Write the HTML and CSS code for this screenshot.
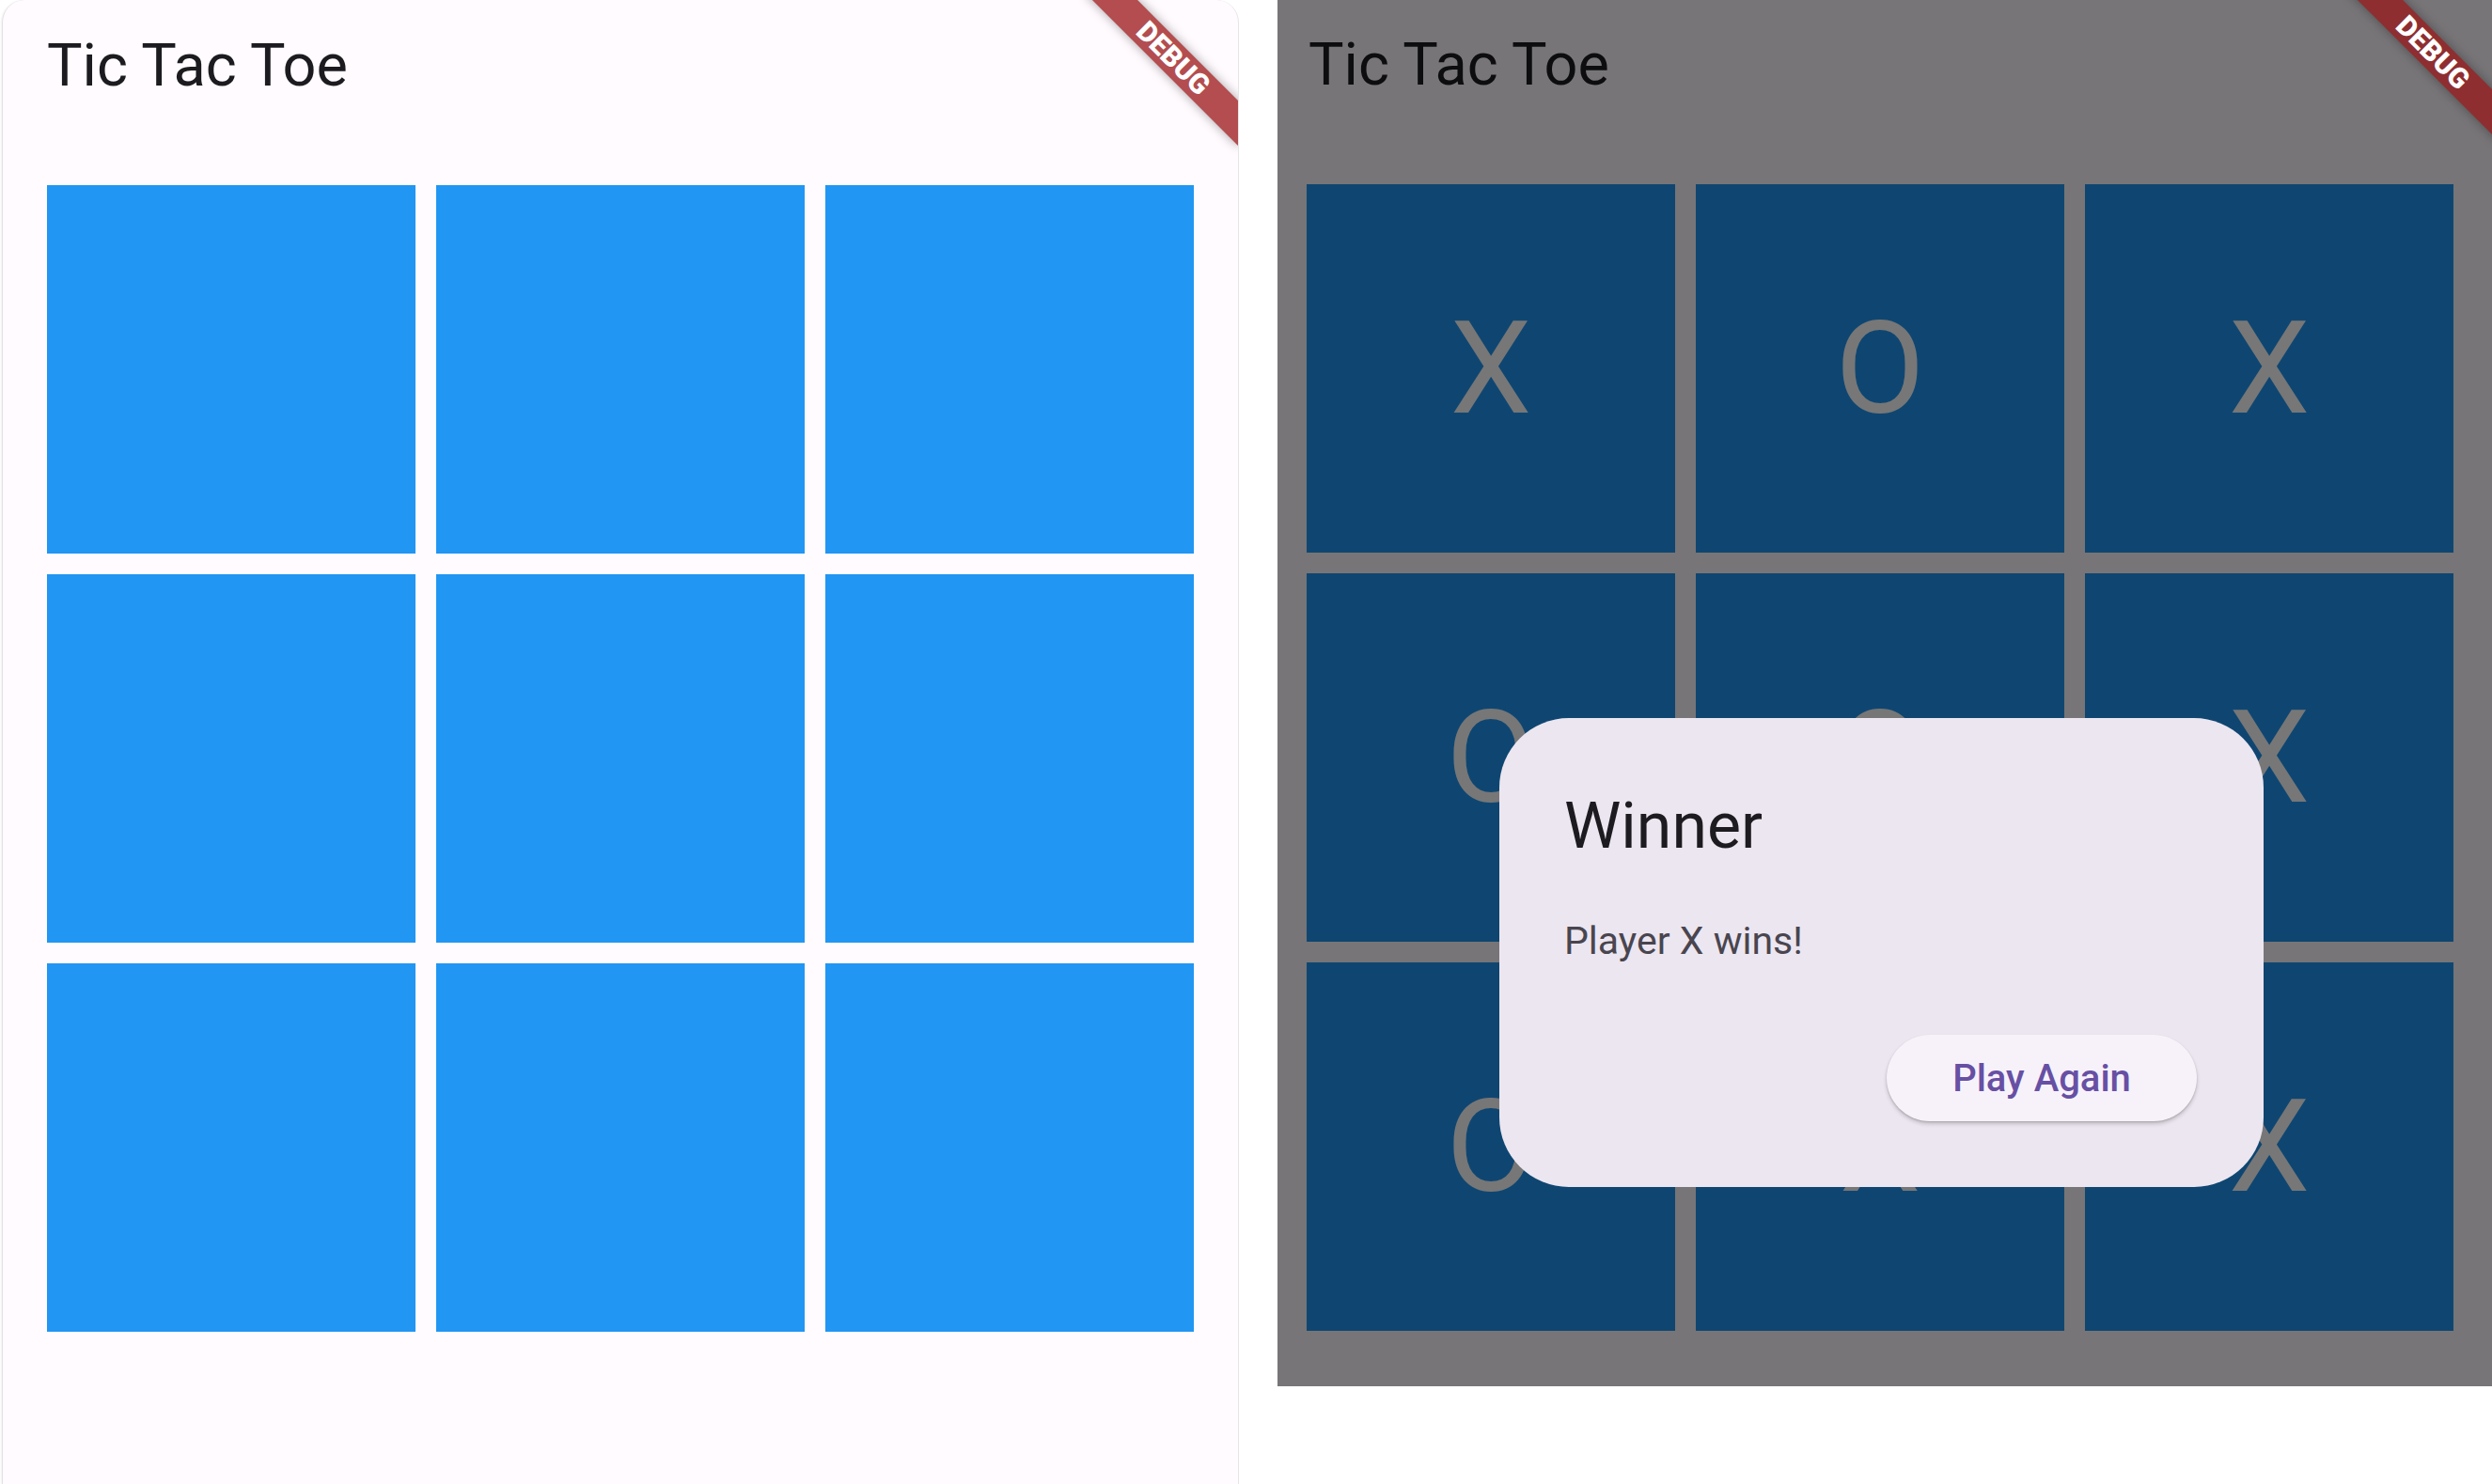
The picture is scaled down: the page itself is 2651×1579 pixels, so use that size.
FILE: index.html
```html
<!DOCTYPE html>
<html lang="en">
<head>
<meta charset="utf-8">
<title>Tic Tac Toe</title>
<link rel="stylesheet" href="styles.css">
</head>
<body>
<div class="stage">
  <section class="device device--left">
    <div class="app">
      <header class="appbar"><h1 class="appbar__title">Tic Tac Toe</h1></header>
      <div class="board">
        <div class="cell"></div>
        <div class="cell"></div>
        <div class="cell"></div>
        <div class="cell"></div>
        <div class="cell"></div>
        <div class="cell"></div>
        <div class="cell"></div>
        <div class="cell"></div>
        <div class="cell"></div>
      </div>
    </div>
    <div class="debug-banner debug-banner--left">DEBUG</div>
  </section>

  <section class="device device--right">
    <div class="app app--cropped">
      <header class="appbar"><h1 class="appbar__title appbar__title--nudge">Tic Tac Toe</h1></header>
      <div class="board">
        <div class="cell"><span class="mark">X</span></div>
        <div class="cell"><span class="mark">O</span></div>
        <div class="cell"><span class="mark">X</span></div>
        <div class="cell"><span class="mark">O</span></div>
        <div class="cell"><span class="mark">O</span></div>
        <div class="cell"><span class="mark">X</span></div>
        <div class="cell"><span class="mark">O</span></div>
        <div class="cell"><span class="mark">X</span></div>
        <div class="cell"><span class="mark">X</span></div>
      </div>
    </div>
    <div class="scrim"></div>
    <div class="dialog" role="dialog" aria-labelledby="dlg-title">
      <h2 class="dialog__title" id="dlg-title">Winner</h2>
      <p class="dialog__content">Player X wins!</p>
      <div class="dialog__actions">
        <button class="btn-elevated" type="button">Play Again</button>
      </div>
    </div>
    <div class="debug-banner debug-banner--right">DEBUG</div>
  </section>
</div>
</body>
</html>
```

FILE: styles.css
```css
html, body {
  margin: 0;
  padding: 0;
  background: #ffffff;
  overflow: hidden;
}

body {
  font-family: Roboto, "Noto Sans", "Liberation Sans", sans-serif;
  width: 2651px;
  height: 1579px;
}

.stage {
  display: flex;
  align-items: flex-start;
  height: 1579px;
}

/* ---------- device frames ---------- */
.device {
  position: relative;
  overflow: hidden;
  background: #fffbfe;
  flex: none;
}

.device--left {
  margin-left: 2px;
  width: 1314px;
  height: 1579px;
  border-left: 1px solid #e2e2e2;
  border-right: 1px solid #e6e6e6;
  border-radius: 24px 24px 0 0;
  box-shadow: -1px 0 2px rgba(0, 0, 0, 0.05);
}

.device--right {
  margin-left: 41px;
  width: 1292px;
  height: 1475px;
}

/* ---------- app ---------- */
.app {
  box-sizing: border-box;
  width: 1314px;
  padding: 0 47px;
}

.app--cropped {
  width: 1317px;
  margin: -1px 0 0 -16px;
}

.appbar {
  box-sizing: border-box;
  height: 197px;
  padding-top: 33px;
}

.appbar__title {
  margin: 0;
  font-size: 63px;
  line-height: 74px;
  font-weight: 400;
  color: #1c1b1f;
}

.appbar__title--nudge {
  padding-left: 2px;
}

.board {
  display: grid;
  grid-template-columns: repeat(3, 392px);
  grid-auto-rows: 392px;
  gap: 22px;
}

.cell {
  background: #2196f3;
  display: flex;
  align-items: center;
  justify-content: center;
}

.mark {
  color: #ffffff;
  font-size: 138px;
  line-height: normal;
  font-weight: 400;
}

/* ---------- modal ---------- */
.scrim {
  position: absolute;
  inset: 0;
  background: rgba(0, 0, 0, 0.535);
}

.dialog {
  position: absolute;
  left: 236px;
  top: 764px;
  width: 813px;
  height: 499px;
  box-sizing: border-box;
  padding: 75px 71px 70px 69px;
  background: #ece6f0;
  border-radius: 74px;
  display: flex;
  flex-direction: column;
}

.dialog__title {
  margin: 0;
  font-size: 68px;
  line-height: 80px;
  font-weight: 400;
  color: #1d1b20;
}

.dialog__content {
  margin: 59px 0 0;
  font-size: 41px;
  line-height: 47px;
  color: #49454f;
}

.dialog__actions {
  margin-top: auto;
  display: flex;
  justify-content: flex-end;
}

.btn-elevated {
  width: 330px;
  height: 92px;
  padding: 0;
  border: none;
  border-radius: 46px;
  background: #f7f2fa;
  color: #6750a4;
  font-family: Roboto, "Noto Sans", sans-serif;
  font-size: 40px;
  font-weight: 500;
  line-height: 47px;
  box-shadow: 0 3px 4px rgba(0, 0, 0, 0.18), 0 1px 2px rgba(0, 0, 0, 0.14);
}

/* ---------- debug banner ---------- */
.debug-banner {
  position: absolute;
  width: 230px;
  height: 34px;
  transform: rotate(45deg);
  color: #ffffff;
  font-size: 30px;
  font-weight: 900;
  line-height: 34px;
  text-align: center;
  box-shadow: 0 0 12px rgba(0, 0, 0, 0.35);
}

.debug-banner--left {
  left: 1130px;
  top: 45px;
  background: #b34d4f;
}

.debug-banner--right {
  left: 1114px;
  top: 39px;
  background: #8e2e30;
}
```
